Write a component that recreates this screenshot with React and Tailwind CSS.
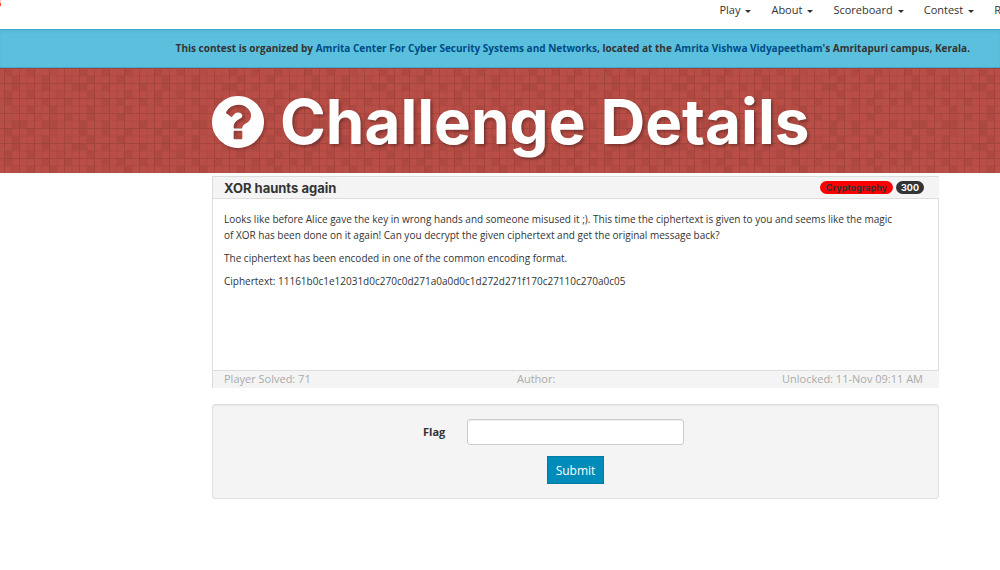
const darkCells = [
  [1, 4, 11, 14, 17],
  [2, 6, 12, 16],
  [2, 6, 10, 11, 14, 19],
  [1, 4, 12, 17],
  [1, 6, 9, 14, 16, 19],
  [4, 7, 12, 17],
  [9, 12, 16],
  [2, 3, 6, 7, 11, 14, 19],
];

const faintCells = [[7], [9], [4], [8], [], [2, 14], [5, 7], []];

function BannerPattern() {
  const squares = (rows, opacity) =>
    rows.flatMap((cols, y) =>
      cols.map((x) => (
        <rect key={`${x}-${y}`} x={x * 7.5} y={y * 7.5} width="7.5" height="7.5" fill="#a3443e" opacity={opacity} />
      ))
    );
  return (
    <svg className="absolute inset-0 h-full w-full" aria-hidden="true">
      <defs>
        <pattern id="squares" width="150" height="60" x="-3" y="0" patternUnits="userSpaceOnUse">
          <rect width="150" height="60" fill="#b94e46" />
          {squares(darkCells, 0.5)}
          {squares(faintCells, 0.25)}
        </pattern>
        <pattern id="lines" width="15" height="15" x="4" y="0" patternUnits="userSpaceOnUse">
          <path d="M.5 0V15M0 .5H15" stroke="#9c413b" strokeWidth="1" opacity=".75" />
          <path d="M8 0V15M0 8H15" stroke="#a4443e" strokeWidth="1" opacity=".55" />
        </pattern>
      </defs>
      <rect width="100%" height="100%" fill="url(#squares)" />
      <rect width="100%" height="100%" fill="url(#lines)" />
    </svg>
  );
}

function QuestionIcon() {
  return (
    <svg viewBox="128 128 1536 1536" fill="currentColor" aria-hidden="true" className="size-[52px] drop-shadow-[2px_2px_1px_rgba(0,0,0,0.2)]">
      <path d="M1024 1376v-192q0-14-9-23t-23-9h-192q-14 0-23 9t-9 23v192q0 14 9 23t23 9h192q14 0 23-9t9-23zm256-672q0-88-55.500-163t-138.500-116-170-41q-243 0-371 213-15 24 8 42l132 100q7 6 19 6 16 0 25-12 53-68 86-92 34-24 86-24 48 0 85.500 26t37.500 59q0 38-20 61t-68 45q-63 28-115.500 86.500t-52.500 125.500v36q0 14 9 23t23 9h192q14 0 23-9t9-23q0-19 21.500-49.500t54.500-49.500q32-18 49-28.500t46-35 44.500-48 28-60.500 12.500-81zm384 192q0 209-103 385.500t-279.500 279.500-385.500 103-385.500-103-279.500-279.500-103-385.500 103-385.500 279.500-279.500 385.500-103 385.500 103 279.500 279.500 103 385.500z" />
    </svg>
  );
}

const menu = ["Play", "About", "Scoreboard", "Contest", "Rules"];

export default function App() {
  return (
    <div className="overflow-x-hidden bg-white font-['Open_Sans',sans-serif] text-[11px] leading-4 text-[#333]">
      <header className="relative flex h-[29px] items-start justify-end overflow-hidden pt-0.5">
        <span className="absolute top-0 left-0 h-[6px] w-px border-b-[3px] border-[#f04e30] bg-[#fbc4bb]" />
        <nav className="-mr-[33px] flex gap-5">
          {menu.map((item) => (
            <a key={item} href="#" className="flex items-center gap-[5px] whitespace-nowrap">
              {item}
              <span className="mt-0.5 border-x-[3px] border-t-[3px] border-x-transparent border-t-[#333]" />
            </a>
          ))}
        </nav>
      </header>

      <p className="border-y border-[#3fa9cc] bg-[#5bc0de] pt-2.5 pr-[30px] pb-[11px] text-right text-[10px] font-bold whitespace-nowrap shadow-[inset_0_2px_3px_rgba(0,0,0,0.05)]">
        This contest is organized by{" "}
        <a href="#" className="text-[#004b85]">Amrita Center For Cyber Security Systems and Networks</a>, located at the{" "}
        <a href="#" className="text-[#004b85]">Amrita Vishwa Vidyapeetham</a>'s Amritapuri campus, Kerala.
      </p>

      <div className="relative h-[105px]">
        <BannerPattern />
        <h1 className="relative ml-[212px] flex items-center gap-4 pt-4 font-['Inter',sans-serif] text-[62px] leading-[76px] font-bold whitespace-nowrap text-white [text-shadow:2px_2px_3px_rgba(0,0,0,0.3)]">
          <QuestionIcon />
          Challenge Details
        </h1>
      </div>

      <main className="mr-[61px] ml-[212px] pt-[3px]">
        <article className="border-t border-l border-[#ddd]">
          <div className="flex h-[22px] items-center justify-between border-b border-[#ddd] bg-[#f4f4f4] pr-[15px] pl-[11px] font-['Inter',sans-serif] font-bold">
            <h2 className="text-[13px]">XOR haunts again</h2>
            <div className="flex gap-[3px] text-[9px] leading-[13px]">
              <span className="rounded-full bg-[red] px-1.5">Cryptography</span>
              <span className="rounded-full bg-[#333] px-[5px] text-white">300</span>
            </div>
          </div>
          <div className="flex h-[172px] flex-col gap-[7px] border-r border-b border-[#ddd] px-[11px] pt-3 text-[10px]">
            <p>
              Looks like before Alice gave the key in wrong hands and someone misused it ;). This time the ciphertext is given to you and seems like the magic
              <br />
              of XOR has been done on it again! Can you decrypt the given ciphertext and get the original message back?
            </p>
            <p>The ciphertext has been encoded in one of the common encoding format.</p>
            <p>Ciphertext: 11161b0c1e12031d0c270c0d271a0a0d0c1d272d271f170c27110c270a0c05</p>
          </div>
          <footer className="grid h-[17px] grid-cols-3 bg-[#f4f4f4] pr-4 pl-[11px] text-[#aaa]">
            <span>Player Solved: 71</span>
            <span className="pl-[60px]">Author:</span>
            <span className="text-right">Unlocked: 11-Nov 09:11 AM</span>
          </footer>
        </article>

        <form className="mt-4 rounded-[3px] border border-[#e0e0e0] bg-[#f4f4f4] py-3.5 shadow-[inset_0_1px_1px_rgba(0,0,0,0.05)]" onSubmit={(e) => e.preventDefault()}>
          <div className="flex items-center gap-[22px] pl-[210px]">
            <label htmlFor="flag" className="font-bold">Flag</label>
            <input id="flag" type="text" className="h-[26px] w-[217px] rounded-[3px] border border-[#ccc] bg-white px-1.5 shadow-[inset_0_1px_1px_rgba(0,0,0,0.075)]" />
          </div>
          <div className="mt-[11px] flex justify-center">
            <button type="submit" className="h-7 border border-[#007ba3] bg-[#008cba] px-2 pt-0.5 text-xs text-white">Submit</button>
          </div>
        </form>
      </main>
    </div>
  );
}
